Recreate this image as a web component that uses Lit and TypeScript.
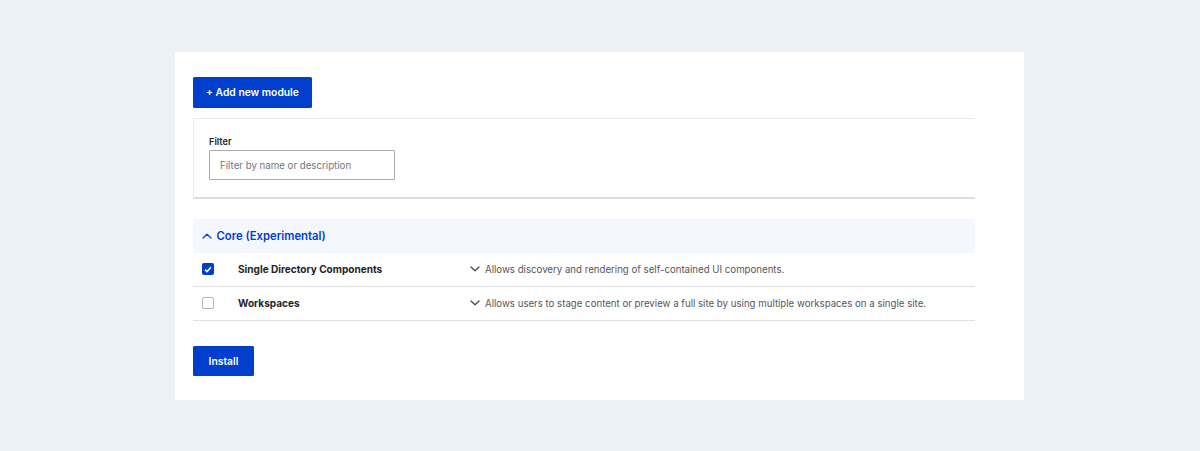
import {html, css, LitElement} from 'lit';
import {customElement} from 'lit/decorators.js';

const chevron = (up = false) => html`<svg class="chev" width="10" height="6" viewBox="0 0 10 6" fill="none">
	<path d=${up ? 'M1 5L5 1.2L9 5' : 'M1 1L5 4.8L9 1'} stroke="currentColor" stroke-width="1.2" stroke-linecap="round" stroke-linejoin="round"></path>
</svg>`;

@customElement('app-root')
export class AppRoot extends LitElement {
	static styles = css`
		*,
		:host {
			box-sizing: border-box;
		}

		:host {
			display: block;
			height: 451px;
			padding: 52px 176px 51px 175px;
			background: #ecf1f6;
			font-family: Inter, "Liberation Sans", sans-serif;
			color: #232429;
		}

		.card {
			height: 348px;
			padding: 25px 49px 0 18px;
			background: #fff;
		}

		.btn {
			display: flex;
			align-items: center;
			justify-content: center;
			height: 30.5px;
			border: 0;
			border-radius: 1.5px;
			background: #003ecc;
			color: #fff;
			font: 600 10.3px Inter, "Liberation Sans", sans-serif;
		}

		.add {
			width: 119px;
		}

		.filter {
			height: 80.5px;
			margin-top: 10.5px;
			padding: 16px 0 0 15px;
			border: 1px solid #e8e8ea;
			border-right: 0;
			border-bottom: 2px solid #dedee2;
			border-radius: 1px 0 0 1px;
		}

		.filter label {
			display: block;
			height: 15px;
			font-size: 9.2px;
			font-weight: 600;
			line-height: 14px;
		}

		.input {
			display: flex;
			align-items: center;
			width: 186px;
			height: 30px;
			padding-left: 10px;
			border: 1px solid #a9a9af;
			border-radius: 1px;
			color: #75757c;
			font-size: 9.7px;
		}

		.head {
			display: flex;
			align-items: center;
			height: 34px;
			margin-top: 20px;
			padding-left: 8.5px;
			background: #f4f8fe;
			color: #003ecc;
			font-size: 11.3px;
			font-weight: 600;
		}

		.head .chev {
			margin-right: 5px;
		}

		.row {
			display: grid;
			grid-template-columns: 45px 232px 15px 1fr;
			align-items: center;
			height: 34px;
			border-bottom: 1px solid #e0e0e4;
		}

		.box {
			width: 12px;
			height: 12px;
			margin-left: 9px;
			border: 1px solid #b4b4ba;
			border-radius: 2px;
		}

		.box.on {
			display: flex;
			align-items: center;
			justify-content: center;
			border: 0;
			background: #003ecc;
		}

		.name {
			font-size: 10.05px;
			font-weight: 700;
		}

		.row .chev {
			color: #3f3f46;
		}

		.desc {
			color: #55555c;
			font-size: 9.66px;
		}

		.install {
			width: 61px;
			margin-top: 25px;
		}
	`;

	render() {
		return html`<div class="card">
			<button class="btn add">+ Add new module</button>
			<div class="filter">
				<label>Filter</label>
				<div class="input">Filter by name or description</div>
			</div>
			<div class="head">${chevron(true)}<span>Core (Experimental)</span></div>
			<div class="row">
				<div class="box on">
					<svg width="8" height="7" viewBox="0 0 8 7" fill="none"><path d="M1 3.6L3 5.6L7 1.2" stroke="#fff" stroke-width="1.5"></path></svg>
				</div>
				<div class="name">Single Directory Components</div>
				${chevron()}
				<div class="desc">Allows discovery and rendering of self-contained UI components.</div>
			</div>
			<div class="row">
				<div class="box"></div>
				<div class="name">Workspaces</div>
				${chevron()}
				<div class="desc">Allows users to stage content or preview a full site by using multiple workspaces on a single site.</div>
			</div>
			<button class="btn install">Install</button>
		</div>`;
	}
}
